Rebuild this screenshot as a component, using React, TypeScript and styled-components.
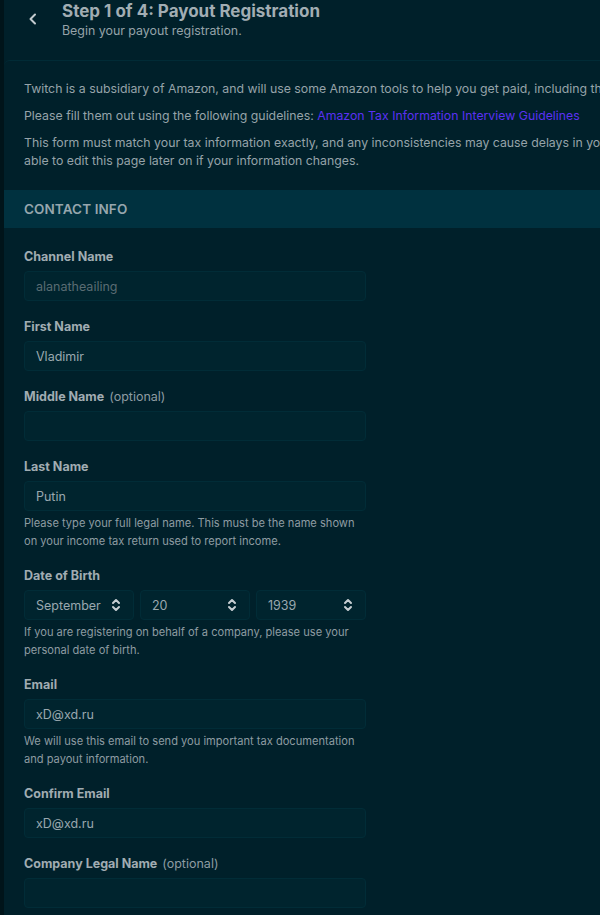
import React from "react";
import styled, { createGlobalStyle } from "styled-components";

const GlobalStyle = createGlobalStyle`
  html, body {
    margin: 0;
    padding: 0;
    background: #00202a;
    overflow: hidden;
  }
  body {
    font-family: Inter, "Noto Sans", "Liberation Sans", sans-serif;
    color: #96a3a9;
  }
`;

const Page = styled.div`
  display: flex;
  min-height: 915px;
  width: 600px;
  overflow: hidden;
  background: #00202a;
`;

const SideEdge = styled.div`
  flex: 0 0 4px;
  background: #00141a;
`;

const Main = styled.div`
  flex: 1;
  min-width: 0;
`;

const Header = styled.header`
  display: flex;
  align-items: flex-start;
  height: 60px;
  box-sizing: border-box;
  padding-top: 1px;
`;

const BackButton = styled.button`
  width: 58px;
  height: 36px;
  display: flex;
  align-items: center;
  justify-content: center;
  padding: 0;
  background: none;
  border: none;
  color: #c3cbcf;
  cursor: pointer;
`;

const TitleBlock = styled.div`
  display: flex;
  flex-direction: column;
`;

const Title = styled.h1`
  margin: 0;
  font-size: 17px;
  line-height: 20px;
  font-weight: 700;
  color: #a2adb3;
`;

const Subtitle = styled.p`
  margin: 1px 0 0;
  font-size: 12.4px;
  line-height: 18px;
  color: #96a3a9;
`;

const Card = styled.section`
  width: 900px;
  border-top: 1px solid #012b36;
  border-top-left-radius: 6px;
  background: #00202a;
`;

const Intro = styled.div`
  padding: 19px 20px 11px;
`;

const Para = styled.p`
  margin: 0 0 9px;
  font-size: 12.3px;
  line-height: 18px;
  white-space: nowrap;
  color: #96a3a9;
`;

const Link = styled.a`
  color: #5b30f2;
  text-decoration: none;
`;

const SectionBar = styled.div`
  height: 38px;
  display: flex;
  align-items: center;
  padding: 0 20px;
  background: #00313f;
  font-size: 13.5px;
  font-weight: 600;
  letter-spacing: 0.1px;
  color: #96a6ad;
  text-transform: uppercase;
`;

const Form = styled.div`
  width: 342px;
  padding: 20px 20px 0;
  display: flex;
  flex-direction: column;
  gap: 17px;
`;

const Field = styled.div`
  display: flex;
  flex-direction: column;
`;

const Label = styled.label`
  display: flex;
  align-items: baseline;
  gap: 5px;
  font-size: 12.5px;
  line-height: 18px;
  font-weight: 700;
  color: #a0acb2;
  margin-bottom: 5px;
`;

const Optional = styled.span`
  font-weight: 400;
  color: #8e9ca2;
`;

const Input = styled.div<{ $disabled?: boolean }>`
  height: 30px;
  box-sizing: border-box;
  display: flex;
  align-items: center;
  padding: 0 11px;
  border: 1px solid #012c37;
  border-radius: 4px;
  background: #00242e;
  font-size: 12.5px;
  color: ${p => (p.$disabled ? "#5a6c73" : "#9aa8ae")};
`;

const SelectRow = styled.div`
  display: grid;
  grid-template-columns: repeat(3, 1fr);
  gap: 6px;
`;

const Select = styled(Input)`
  justify-content: space-between;
  padding-right: 12px;
`;

const Help = styled.p`
  margin: 3px 0 0;
  font-size: 11.1px;
  line-height: 18px;
  color: #8e9ca2;
`;

const Chevron = () => (
  <svg width="10" height="16" viewBox="0 0 10 16" fill="none">
    <path d="M2 6l3-3 3 3M2 10l3 3 3-3" stroke="#c6ced2" strokeWidth="2" strokeLinecap="round" strokeLinejoin="round" />
  </svg>
);

const BackIcon = () => (
  <svg width="10" height="12" viewBox="0 0 10 12" fill="none">
    <path d="M7 1.5L2.5 6 7 10.5" stroke="currentColor" strokeWidth="2" strokeLinecap="round" strokeLinejoin="round" />
  </svg>
);

type FieldProps = {
  label: string;
  optional?: boolean;
  value?: string;
  disabled?: boolean;
  help?: React.ReactNode;
};

const TextField = ({ label, optional, value, disabled, help }: FieldProps) => (
  <Field>
    <Label>
      {label}
      {optional && <Optional>(optional)</Optional>}
    </Label>
    <Input $disabled={disabled}>{value}</Input>
    {help && <Help>{help}</Help>}
  </Field>
);

export default function App() {
  return (
    <>
      <GlobalStyle />
      <Page>
        <SideEdge />
        <Main>
          <Header>
            <BackButton>
              <BackIcon />
            </BackButton>
            <TitleBlock>
              <Title>Step 1 of 4: Payout Registration</Title>
              <Subtitle>Begin your payout registration.</Subtitle>
            </TitleBlock>
          </Header>
          <Card>
            <Intro>
              <Para>
                Twitch is a subsidiary of Amazon, and will use some Amazon tools to help you get paid, including the
                Amazon tax interview.
              </Para>
              <Para>
                Please fill them out using the following guidelines:{" "}
                <Link href="#">Amazon Tax Information Interview Guidelines</Link>
              </Para>
              <Para>
                This form must match your tax information exactly, and any inconsistencies may cause delays in your
                payouts. You will be
                <br />
                able to edit this page later on if your information changes.
              </Para>
            </Intro>
            <SectionBar>Contact Info</SectionBar>
            <Form>
              <TextField label="Channel Name" value="alanatheailing" disabled />
              <TextField label="First Name" value="Vladimir" />
              <TextField label="Middle Name" optional />
              <TextField
                label="Last Name"
                value="Putin"
                help="Please type your full legal name. This must be the name shown on your income tax return used to report income."
              />
              <Field>
                <Label>Date of Birth</Label>
                <SelectRow>
                  <Select>
                    September
                    <Chevron />
                  </Select>
                  <Select>
                    20
                    <Chevron />
                  </Select>
                  <Select>
                    1939
                    <Chevron />
                  </Select>
                </SelectRow>
                <Help>If you are registering on behalf of a company, please use your personal date of birth.</Help>
              </Field>
              <TextField
                label="Email"
                value="xD@xd.ru"
                help="We will use this email to send you important tax documentation and payout information."
              />
              <TextField label="Confirm Email" value="xD@xd.ru" />
              <TextField label="Company Legal Name" optional />
            </Form>
          </Card>
        </Main>
      </Page>
    </>
  );
}
